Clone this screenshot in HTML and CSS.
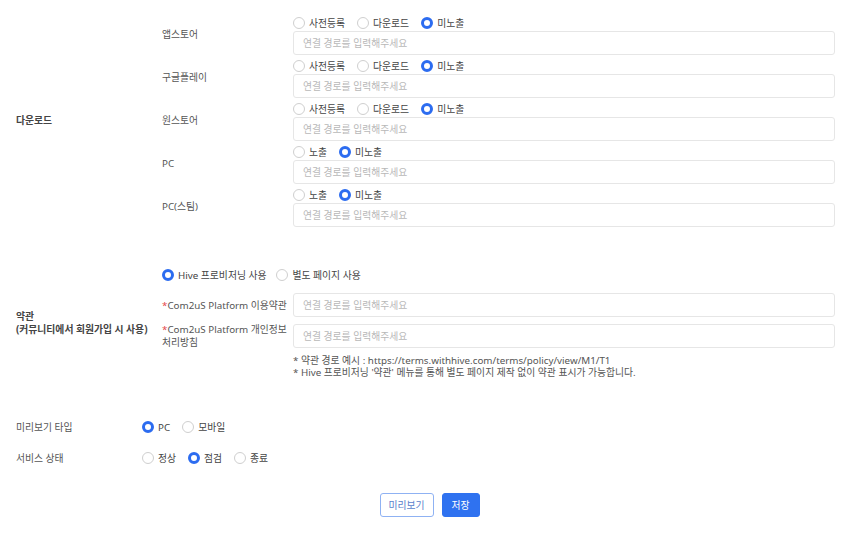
FILE: index.html
```html
<!DOCTYPE html>
<html lang="ko">
<head>
<meta charset="utf-8">
<link rel="stylesheet" href="styles.css">
</head>
<body>
<div class="page">
  <section class="group dl">
    <div class="glabel">다운로드</div>
    <div class="rows">
      <div class="row">
        <div class="sublabel">앱스토어</div>
        <div class="field">
          <div class="radios">
            <span class="radio"><i class="dot"></i>사전등록</span>
            <span class="radio"><i class="dot"></i>다운로드</span>
            <span class="radio"><i class="dot on"></i>미노출</span>
          </div>
          <div class="input">연결 경로를 입력해주세요</div>
        </div>
      </div>
      <div class="row">
        <div class="sublabel">구글플레이</div>
        <div class="field">
          <div class="radios">
            <span class="radio"><i class="dot"></i>사전등록</span>
            <span class="radio"><i class="dot"></i>다운로드</span>
            <span class="radio"><i class="dot on"></i>미노출</span>
          </div>
          <div class="input">연결 경로를 입력해주세요</div>
        </div>
      </div>
      <div class="row">
        <div class="sublabel">원스토어</div>
        <div class="field">
          <div class="radios">
            <span class="radio"><i class="dot"></i>사전등록</span>
            <span class="radio"><i class="dot"></i>다운로드</span>
            <span class="radio"><i class="dot on"></i>미노출</span>
          </div>
          <div class="input">연결 경로를 입력해주세요</div>
        </div>
      </div>
      <div class="row">
        <div class="sublabel">PC</div>
        <div class="field">
          <div class="radios">
            <span class="radio"><i class="dot"></i>노출</span>
            <span class="radio"><i class="dot on"></i>미노출</span>
          </div>
          <div class="input">연결 경로를 입력해주세요</div>
        </div>
      </div>
      <div class="row">
        <div class="sublabel">PC(스팀)</div>
        <div class="field">
          <div class="radios">
            <span class="radio"><i class="dot"></i>노출</span>
            <span class="radio"><i class="dot on"></i>미노출</span>
          </div>
          <div class="input">연결 경로를 입력해주세요</div>
        </div>
      </div>
    </div>
  </section>

  <section class="group terms">
    <div class="glabel">약관<br>(커뮤니티에서 회원가입 시 사용)</div>
    <div class="tbody">
      <div class="radios tradios">
        <span class="radio"><i class="dot on"></i>Hive 프로비저닝 사용</span>
        <span class="radio"><i class="dot"></i>별도 페이지 사용</span>
      </div>
      <div class="trow first">
        <div class="sublabel"><span class="req">*</span>Com2uS Platform 이용약관</div>
        <div class="input">연결 경로를 입력해주세요</div>
      </div>
      <div class="trow">
        <div class="sublabel"><span class="req">*</span>Com2uS Platform 개인정보<br>처리방침</div>
        <div class="input">연결 경로를 입력해주세요</div>
      </div>
      <div class="notes">
        <p>* 약관 경로 예시 : https://terms.withhive.com/terms/policy/view/M1/T1</p>
        <p>* Hive 프로비저닝 '약관' 메뉴를 통해 별도 페이지 제작 없이 약관 표시가 가능합니다.</p>
      </div>
    </div>
  </section>

  <section class="opts">
    <div class="orow">
      <div class="olabel">미리보기 타입</div>
      <div class="radios">
        <span class="radio"><i class="dot on"></i>PC</span>
        <span class="radio"><i class="dot"></i>모바일</span>
      </div>
    </div>
    <div class="orow">
      <div class="olabel">서비스 상태</div>
      <div class="radios">
        <span class="radio"><i class="dot"></i>정상</span>
        <span class="radio"><i class="dot on"></i>점검</span>
        <span class="radio"><i class="dot"></i>종료</span>
      </div>
    </div>
  </section>

  <div class="actions">
    <button class="btn ghost">미리보기</button>
    <button class="btn primary">저장</button>
  </div>
</div>
</body>
</html>
```
FILE: styles.css
```css
* { box-sizing: border-box; }
html, body { margin: 0; padding: 0; background: #fff; }
body {
  font-family: "Noto Sans", "Noto Sans CJK KR", sans-serif;
  font-size: 9.8px;
  color: #555;
  width: 851px;
}
.page { padding: 14px 16px 0 16px; }

.group { display: flex; align-items: center; }
.glabel { width: 146px; flex: none; font-weight: 700; color: #444; line-height: 13px; }

.rows { display: flex; flex-direction: column; gap: 2px; }
.row { display: flex; align-items: center; }
.sublabel { width: 131px; flex: none; color: #555; line-height: 13px; }
.field { width: 542px; display: flex; flex-direction: column; }

.radios { display: flex; align-items: center; height: 17px; gap: 12px; }
.radio { display: flex; align-items: center; gap: 4px; color: #444; white-space: nowrap; }
.dot {
  width: 12px; height: 12px; border-radius: 50%;
  border: 1px solid #cfcfcf; background: #fff; flex: none;
}
.dot.on { border: 3.5px solid #2c6cf0; }

.input {
  height: 24px; border: 1px solid #e6e6e6; border-radius: 3px;
  padding: 0 9px; display: flex; align-items: center; color: #b8b8b8;
  background: #fff;
}

.terms { margin-top: 39px; }
.tbody { display: flex; flex-direction: column; width: 673px; }
.tradios { gap: 10px; }
.trow { display: flex; align-items: center; margin-top: 6px; }
.trow.first { margin-top: 10px; }
.trow .input { width: 542px; }
.req { color: #e5484d; }
.notes { margin: 6px 0 0 131px; }
.notes p { margin: 0; line-height: 12px; color: #555; }

.opts { margin-top: 38px; display: flex; flex-direction: column; gap: 11px; }
.orow { display: flex; align-items: center; height: 20px; }
.olabel { width: 126px; flex: none; color: #555; }

.actions { display: flex; justify-content: center; gap: 8px; margin-top: 25px; padding-left: 8px; }
.btn {
  font-family: inherit; font-size: 9.8px; height: 24px; border-radius: 3px;
  padding: 0; cursor: pointer;
}
.btn.ghost { width: 54px; background: #fff; border: 1px solid #8fb2f3; color: #5b7fcc; }
.btn.primary { width: 38px; background: #2f72f0; border: 1px solid #2f72f0; color: #fff; }
```
